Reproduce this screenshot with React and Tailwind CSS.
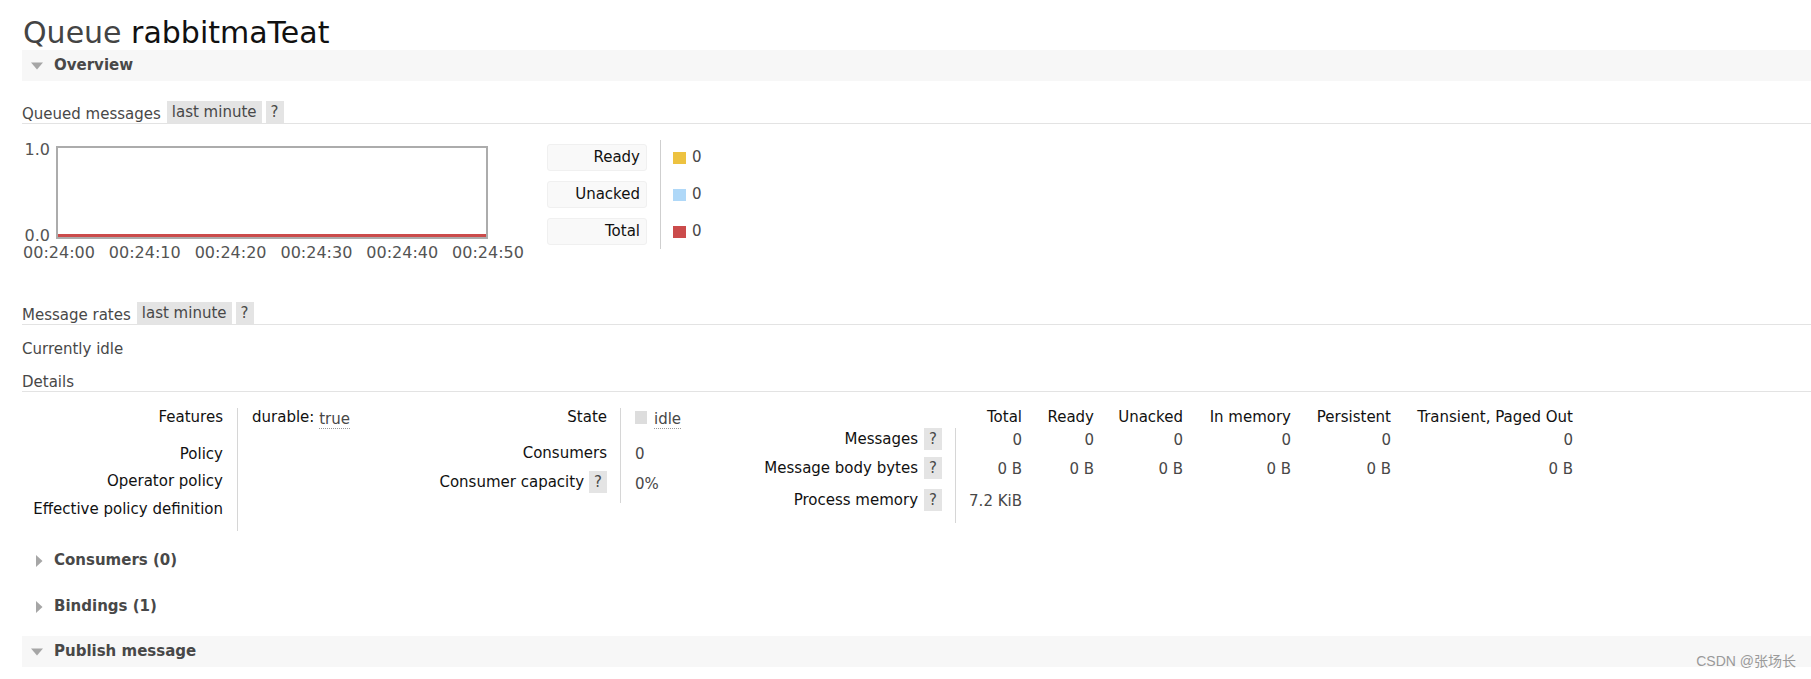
import React from 'react';

const Tag = ({ children, className = '' }) => (
  <span className={`inline-flex h-[22px] items-center bg-[#e4e4e4] px-[5px] text-[#484848] ${className}`}>
    {children}
  </span>
);

const DownArrow = () => (
  <svg width="12" height="10" viewBox="0 0 12 10" className="shrink-0">
    <polygon points="0,1.5 12,1.5 6,8.5" fill="#a6a6a6" />
  </svg>
);

const RightArrow = () => (
  <svg width="12" height="14" viewBox="0 0 12 14" className="shrink-0">
    <polygon points="5,1 11.5,7 5,13" fill="#a6a6a6" />
  </svg>
);

function SectionHeader({ title, open, bar }) {
  return (
    <div className={`flex h-[31px] items-center pl-[9px] ${bar ? 'bg-[#f7f7f7]' : ''}`}>
      {open ? <DownArrow /> : <RightArrow />}
      <span className="ml-[11px] font-bold text-[#484848]">{title}</span>
    </div>
  );
}

function Chart() {
  const ticks = ['00:24:00', '00:24:10', '00:24:20', '00:24:30', '00:24:40', '00:24:50'];
  return (
    <svg width="525" height="125" viewBox="0 0 525 125" className="shrink-0">
      <rect x="35" y="7" width="430" height="91" fill="#fff" stroke="#acacac" strokeWidth="2" />
      <line x1="36" y1="95.5" x2="464" y2="95.5" stroke="#cb4b4b" strokeWidth="3" />
      <g fontFamily="'DejaVu Sans', sans-serif" fontSize="16" fill="#545454">
        <text x="28" y="15" textAnchor="end">1.0</text>
        <text x="28" y="101" textAnchor="end">0.0</text>
        {ticks.map((t, i) => (
          <text key={t} x={37 + i * 85.8} y="118" textAnchor="middle">{t}</text>
        ))}
      </g>
    </svg>
  );
}

function Legend() {
  const rows = [
    { label: 'Ready', color: 'bg-[#edc240]' },
    { label: 'Unacked', color: 'bg-[#afd8f8]' },
    { label: 'Total', color: 'bg-[#cb4b4b]' },
  ];
  return (
    <div className="flex">
      <div className="flex w-[100px] flex-col gap-[10px] pt-[4px]">
        {rows.map((r) => (
          <div key={r.label} className="flex h-[27px] items-center justify-end rounded-[3px] border border-[#f0f0f0] bg-[#f9f9f9] pr-[6px] text-[#111]">
            {r.label}
          </div>
        ))}
      </div>
      <div className="ml-[13px] flex h-[109px] flex-col gap-[10px] border-l border-[#cfcfcf] pl-[12px] pt-[4px]">
        {rows.map((r) => (
          <div key={r.label} className="flex h-[27px] items-center gap-[6px]">
            <span className={`h-[12px] w-[13px] ${r.color}`} />
            <span>0</span>
          </div>
        ))}
      </div>
    </div>
  );
}

function Details() {
  const cols = ['Total', 'Ready', 'Unacked', 'In memory', 'Persistent', 'Transient, Paged Out'];
  const rows = [
    { label: 'Messages', vals: ['0', '0', '0', '0', '0', '0'], h: 'h-[29px]' },
    { label: 'Message body bytes', vals: ['0 B', '0 B', '0 B', '0 B', '0 B', '0 B'], h: 'h-[32px]' },
    { label: 'Process memory', vals: ['7.2 KiB', '', '', '', '', ''], h: 'h-[34px]' },
  ];
  return (
    <div className="flex items-start leading-[18px]">
      {/* features / policy */}
      <div className="grid grid-cols-[215px_183px]">
        <div className="h-[37px] pr-[14px] text-right text-[#111]">Features</div>
        <div className="h-[37px] border-l border-[#d6d6d6] pl-[14px]">
          <span className="text-[#111]">durable:</span>{' '}
          <span className="relative top-[2px] border-b border-dotted border-[#999]">true</span>
        </div>
        <div className="h-[27px] pr-[14px] text-right text-[#111]">Policy</div>
        <div className="h-[27px] border-l border-[#d6d6d6]" />
        <div className="h-[28px] pr-[14px] text-right text-[#111]">Operator policy</div>
        <div className="h-[28px] border-l border-[#d6d6d6]" />
        <div className="h-[31px] pr-[14px] text-right text-[#111]">Effective policy definition</div>
        <div className="h-[31px] border-l border-[#d6d6d6]" />
      </div>

      {/* state / consumers */}
      <div className="grid grid-cols-[200px_135px]">
        <div className="h-[36px] pr-[13px] text-right text-[#111]">State</div>
        <div className="flex h-[36px] items-start gap-[7px] border-l border-[#d6d6d6] pl-[14px] pt-[2px]">
          <span className="mt-[1px] h-[13px] w-[12px] bg-[#dddddd]" />
          <span className="border-b border-dotted border-[#999]">idle</span>
        </div>
        <div className="h-[27px] pr-[13px] text-right text-[#111]">Consumers</div>
        <div className="h-[27px] border-l border-[#d6d6d6] pl-[14px] pt-[1px]">0</div>
        <div className="flex h-[32px] items-start justify-end gap-[5px] pr-[13px] text-[#111]">
          <span className="pt-[2px]">Consumer capacity</span>
          <Tag>?</Tag>
        </div>
        <div className="h-[32px] border-l border-[#d6d6d6] pl-[14px] pt-[4px]">0%</div>
      </div>

      {/* message stats */}
      <div className="grid grid-cols-[200px_67px_72px_89px_108px_100px_182px]">
        <div className="h-[20px]" />
        {cols.map((c) => (
          <div key={c} className="h-[20px] text-right text-[#111]">{c}</div>
        ))}
        {rows.map((r) => (
          <React.Fragment key={r.label}>
            <div className={`flex items-start justify-end gap-[6px] pr-[13px] text-[#111] ${r.h}`}>
              <span className="pt-[2px]">{r.label}</span>
              <Tag>?</Tag>
            </div>
            {r.vals.map((v, i) => (
              <div
                key={i}
                className={`pt-[3px] text-right ${r.h} ${i === 0 ? 'border-l border-[#d6d6d6]' : ''}`}
              >
                {v}
              </div>
            ))}
          </React.Fragment>
        ))}
      </div>
    </div>
  );
}

export default function App() {
  return (
    <div className="relative h-[679px] overflow-hidden bg-white pl-[22px] font-['DejaVu_Sans',sans-serif] text-[15px] text-[#484848]">
      <h1 className="h-[50px] pl-px pt-[15px] text-[30px] leading-[35px] font-normal text-[#444]">
        Queue <span className="text-[#111]">rabbitmaTeat</span>
      </h1>

      <SectionHeader title="Overview" open bar />

      <div className="mt-[20px] flex h-[23px] items-start border-b border-[#e3e3e3]">
        <span className="mr-[6px] pt-[2px]">Queued messages</span>
        <Tag>last minute</Tag>
        <Tag className="ml-[4px]">?</Tag>
      </div>

      <div className="mt-[16px] flex items-start">
        <Chart />
        <Legend />
      </div>

      <div className="mt-[37px] flex h-[23px] items-start border-b border-[#e3e3e3]">
        <span className="mr-[6px] pt-[2px]">Message rates</span>
        <Tag>last minute</Tag>
        <Tag className="ml-[4px]">?</Tag>
      </div>

      <p className="mt-[14px] leading-[20px]">Currently idle</p>

      <div className="mt-[10px] flex h-[23px] items-start border-b border-[#e3e3e3]">
        <span className="pt-[2px]">Details</span>
      </div>

      <div className="mt-[16px]">
        <Details />
      </div>

      <div className="mt-[14px]">
        <SectionHeader title="Consumers (0)" />
      </div>
      <div className="mt-[15px]">
        <SectionHeader title="Bindings (1)" />
      </div>
      <div className="mt-[14px]">
        <SectionHeader title="Publish message" open bar />
      </div>

      <p className="mt-[9px] pl-[61px] leading-[20px]">
        Message will be published to the default exchange with routing key <b>rabbitmaTeat</b>, routing it to this queue.
      </p>

      <div className="absolute bottom-[7px] right-[15px] font-['Liberation_Sans','Noto_Sans_CJK_SC',sans-serif] text-[14px] text-[#9a9a9a]">
        CSDN @张场长
      </div>
    </div>
  );
}
